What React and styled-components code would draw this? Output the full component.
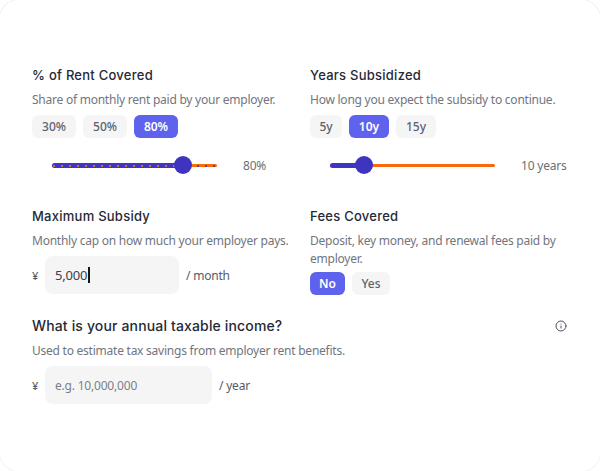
import React from "react";
import styled, { createGlobalStyle } from "styled-components";

const Global = createGlobalStyle`
    html, body {
        margin: 0;
        padding: 0;
        background: #fff;
        overflow: hidden;
    }
`;

const Card = styled.div`
    box-sizing: border-box;
    width: 602px;
    height: 473px;
    margin: -1px;
    padding: 65px 32px 0 32px;
    border: 1px dotted #e6e6e6;
    border-radius: 20px;
    background: #fff;
    font-family: "Noto Sans", sans-serif;
`;
const Grid = styled.div`
    display: grid;
    grid-template-columns: 278px 258px;
    row-gap: 31px;
`;
const Section = styled.div`
    display: flex;
    flex-direction: column;
`;
const IncomeSection = styled(Section)`
    margin-top: 21px;
`;
const Title = styled.div`
    font-family: Inter, sans-serif;
    font-size: 13px;
    font-weight: 500;
    line-height: 20px;
    color: #252a36;
    letter-spacing: 0.25px;
    white-space: nowrap;
`;
const BigTitle = styled(Title)`
    font-size: 14px;
    letter-spacing: 0.15px;
`;
const TitleRow = styled.div`
    display: flex;
    align-items: center;
    justify-content: space-between;
`;
const Desc = styled.div`
    margin-top: 6px;
    font-size: 12px;
    line-height: 18px;
    color: #71757e;
    letter-spacing: -0.24px;
`;
const Options = styled.div`
    display: flex;
    gap: 7px;
    margin-top: ${(p) => p.$top}px;
`;
const Option = styled.div`
    box-sizing: border-box;
    height: 23px;
    width: ${(p) => p.$w}px;
    display: flex;
    align-items: center;
    justify-content: center;
    border-radius: 6px;
    font-size: 12px;
    font-weight: ${(p) => (p.$active ? 600 : 500)};
    color: ${(p) => (p.$active ? "#fff" : "#5b6270")};
    background: ${(p) => (p.$active ? "#5f62ec" : "#f5f5f5")};
`;
const SliderRow = styled.div`
    display: flex;
    align-items: center;
    gap: 26px;
    margin-top: 17px;
    padding-left: 20px;
    height: 20px;
`;
const Track = styled.div`
    position: relative;
    width: 165px;
    height: 3px;
    border-radius: 2px;
    background: #f96a0c;
`;
const Fill = styled.div`
    position: absolute;
    left: 0;
    top: -1px;
    height: 5px;
    width: ${(p) => p.$value}%;
    border-radius: 3px;
    background: #4036c4;
`;
const Ticks = styled.div`
    position: absolute;
    left: 1px;
    right: 2px;
    top: 0;
    height: 3px;
    display: flex;
    justify-content: space-between;
`;
const Tick = styled.i`
    display: block;
    width: 2px;
    height: 2px;
    margin-top: 1px;
    background: ${(p) => (p.$on ? "#d2683c" : "#4a4a9a")};
`;
const Thumb = styled.div`
    position: absolute;
    top: -8px;
    left: ${(p) => p.$value}%;
    width: 18px;
    height: 18px;
    margin-left: -10px;
    border-radius: 50%;
    background: #3f34c0;
`;
const SliderValue = styled.div`
    font-size: 12px;
    color: #6b7078;
    letter-spacing: -0.2px;
    white-space: nowrap;
`;
const FieldRow = styled.div`
    display: flex;
    align-items: center;
    margin-top: 6px;
    font-size: 12px;
    letter-spacing: -0.2px;
    color: #555b66;
`;
const Yen = styled.span`
    width: 13px;
    font-size: 11px;
    font-weight: 500;
    color: #555b66;
`;
const Field = styled.div`
    box-sizing: border-box;
    width: ${(p) => p.$w}px;
    height: 38px;
    margin-right: 7px;
    padding-left: 10px;
    display: flex;
    align-items: center;
    border-radius: 8px;
    background: #f5f5f5;
    font-size: ${(p) => (p.$empty ? "12px" : "13px")};
    color: ${(p) => (p.$empty ? "#7b808a" : "#3a404c")};
`;
const Caret = styled.span`
    display: inline-block;
    width: 1.5px;
    height: 16px;
    margin-left: 1px;
    background: #14161c;
`;
const InfoIcon = styled.svg`
    width: 12px;
    height: 12px;
    margin-right: 1px;
`;

const Slider = ({ value, label, ticks }) => (
    <SliderRow>
        <Track>
            <Fill $value={value} />
            {ticks && (
                <Ticks>
                    {Array.from({ length: ticks }, (_, i) => (
                        <Tick key={i} $on={(i / (ticks - 1)) * 100 <= value} />
                    ))}
                </Ticks>
            )}
            <Thumb $value={value} />
        </Track>
        <SliderValue>{label}</SliderValue>
    </SliderRow>
);

const App = () => {
    return (
        <Card>
            <Global />
            <Grid>
                <Section>
                    <Title>% of Rent Covered</Title>
                    <Desc>Share of monthly rent paid by your employer.</Desc>
                    <Options $top={6}>
                        <Option $w={44}>30%</Option>
                        <Option $w={44}>50%</Option>
                        <Option $w={44} $active>80%</Option>
                    </Options>
                    <Slider value={80} label="80%" ticks={21} />
                </Section>
                <Section>
                    <Title>Years Subsidized</Title>
                    <Desc>How long you expect the subsidy to continue.</Desc>
                    <Options $top={6}>
                        <Option $w={32}>5y</Option>
                        <Option $w={40} $active>10y</Option>
                        <Option $w={40}>15y</Option>
                    </Options>
                    <Slider value={21} label="10 years" />
                </Section>
                <Section>
                    <Title>Maximum Subsidy</Title>
                    <Desc>Monthly cap on how much your employer pays.</Desc>
                    <FieldRow>
                        <Yen>¥</Yen>
                        <Field $w={134}>5,000<Caret /></Field>
                        / month
                    </FieldRow>
                </Section>
                <Section>
                    <Title>Fees Covered</Title>
                    <Desc>Deposit, key money, and renewal fees paid by employer.</Desc>
                    <Options $top={4}>
                        <Option $w={35} $active>No</Option>
                        <Option $w={38}>Yes</Option>
                    </Options>
                </Section>
            </Grid>
            <IncomeSection>
                <TitleRow>
                    <BigTitle>What is your annual taxable income?</BigTitle>
                    <InfoIcon viewBox="0 0 24 24" fill="none" stroke="#4b5563" strokeWidth="2" strokeLinecap="round">
                        <circle cx="12" cy="12" r="10" />
                        <path d="M12 16v-4" />
                        <path d="M12 8h.01" />
                    </InfoIcon>
                </TitleRow>
                <Desc>Used to estimate tax savings from employer rent benefits.</Desc>
                <FieldRow>
                    <Yen>¥</Yen>
                    <Field $w={167} $empty>e.g. 10,000,000</Field>
                    / year
                </FieldRow>
            </IncomeSection>
        </Card>
    );
};

export default App;
